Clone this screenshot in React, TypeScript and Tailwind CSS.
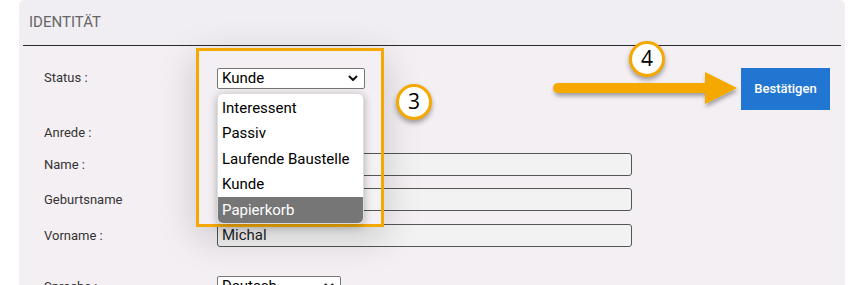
const ORANGE = '#f5a900';

const OPTIONS = ['Interessent', 'Passiv', 'Laufende Baustelle', 'Kunde', 'Papierkorb'];

function Chevron() {
  return (
    <svg width="10" height="7" viewBox="0 0 10 7" className="shrink-0">
      <path d="M1.5 1.5 L5 5 L8.5 1.5" fill="none" stroke="#111" strokeWidth="2" strokeLinecap="round" strokeLinejoin="round" />
    </svg>
  );
}

function Badge({ n, className }: { n: string; className: string }) {
  return (
    <div
      className={`absolute w-[36px] h-[36px] rounded-full bg-white border-[3px] border-[#f5a900] flex items-center justify-center text-[21px] text-black shadow-[0_3px_5px_rgba(0,0,0,0.35)] ${className}`}
      style={{ fontFamily: '"Open Sans", sans-serif' }}
    >
      {n}
    </div>
  );
}

function Row({ label, mt, children }: { label: string; mt: string; children?: React.ReactNode }) {
  return (
    <div className={`flex items-center ${mt}`}>
      <span className="w-[173px] shrink-0 text-[13px] text-[#333]">{label}</span>
      {children}
    </div>
  );
}

function TextInput({ value = '' }: { value?: string }) {
  return (
    <div className="w-[415px] h-[23px] bg-[#f2f2f2] border border-[#555] rounded-[3px] px-[4px] flex items-center text-[15px] text-[#222]">
      {value}
    </div>
  );
}

export default function App() {
  return (
    <div className="w-[855px] h-[285px] bg-white overflow-hidden pl-[19px]" style={{ fontFamily: 'Roboto, "Liberation Sans", sans-serif' }}>
      <div className="relative w-[826px] h-[300px] bg-[#f4eff3] rounded-t-[6px]">
        {/* header */}
        <div className="h-[45px] bg-[#f0eef3] rounded-t-[6px] px-[10px] flex items-center">
          <span className="text-[15px] text-[#666]">IDENTITÄT</span>
        </div>
        <div className="mx-[4px] border-t border-[#2a2a2a]" />

        {/* form */}
        <div className="pl-[25px] pr-[15px] pt-[22px]">
          <div className="flex items-start">
            <span className="w-[173px] shrink-0 text-[13px] leading-[20px] text-[#333]">Status :</span>
            <div className="w-[148px] h-[21px] bg-white border border-[#767676] rounded-[2px] pl-[4px] pr-[6px] flex items-center justify-between text-[15px] text-black">
              <span>Kunde</span>
              <Chevron />
            </div>
            <button className="ml-auto w-[89px] h-[42px] bg-[#2176d2] text-white text-[13px] font-medium">Bestätigen</button>
          </div>
          <Row label="Anrede :" mt="mt-[12px]">
            <div className="w-[140px] h-[22px] bg-white border border-[#767676] rounded-[2px]" />
          </Row>
          <Row label="Name :" mt="mt-[9px]">
            <TextInput />
          </Row>
          <Row label="Geburtsname" mt="mt-[12px]">
            <TextInput />
          </Row>
          <Row label="Vorname :" mt="mt-[13px]">
            <TextInput value="Michal" />
          </Row>
          <Row label="Sprache :" mt="mt-[29px]">
            <div className="w-[124px] h-[21px] bg-white border border-[#767676] rounded-[2px] pl-[4px] pr-[6px] flex items-center justify-between text-[15px] text-black">
              <span>Deutsch</span>
              <Chevron />
            </div>
          </Row>
        </div>

        {/* highlight frame */}
        <div className="absolute left-[177px] top-[48px] w-[188px] h-[179px] border-[3px] border-[#f5a900] shadow-[0_10px_35px_rgba(0,0,0,0.18)]" />

        {/* open dropdown */}
        <div className="absolute left-[198px] top-[93px] w-[147px] h-[131px] bg-white rounded-[6px] overflow-hidden shadow-[0_2px_8px_rgba(0,0,0,0.3)] border border-[#ddd] flex flex-col pt-[1px]">
          {OPTIONS.map((o, i) => (
            <div
              key={o}
              className={`h-[26px] flex items-center pl-[4px] text-[15px] ${i === OPTIONS.length - 1 ? 'bg-[#767676] text-white' : 'text-black'}`}
            >
              {o}
            </div>
          ))}
        </div>

        <Badge n="3" className="left-[377px] top-[84px]" />
        <Badge n="4" className="left-[610px] top-[41px]" />

        {/* arrow */}
        <svg className="absolute left-[529px] top-[68px] overflow-visible" width="192" height="42" viewBox="0 0 192 42">
          <defs>
            <filter id="sh" x="-10%" y="-50%" width="120%" height="200%">
              <feDropShadow dx="1" dy="3" stdDeviation="2" floodColor="#000" floodOpacity="0.35" />
            </filter>
          </defs>
          <g filter="url(#sh)" fill={ORANGE}>
            <rect x="5" y="15" width="160" height="10" rx="5" />
            <path d="M157 4 L189 20 L157 36 Z" />
          </g>
        </svg>
      </div>
    </div>
  );
}
